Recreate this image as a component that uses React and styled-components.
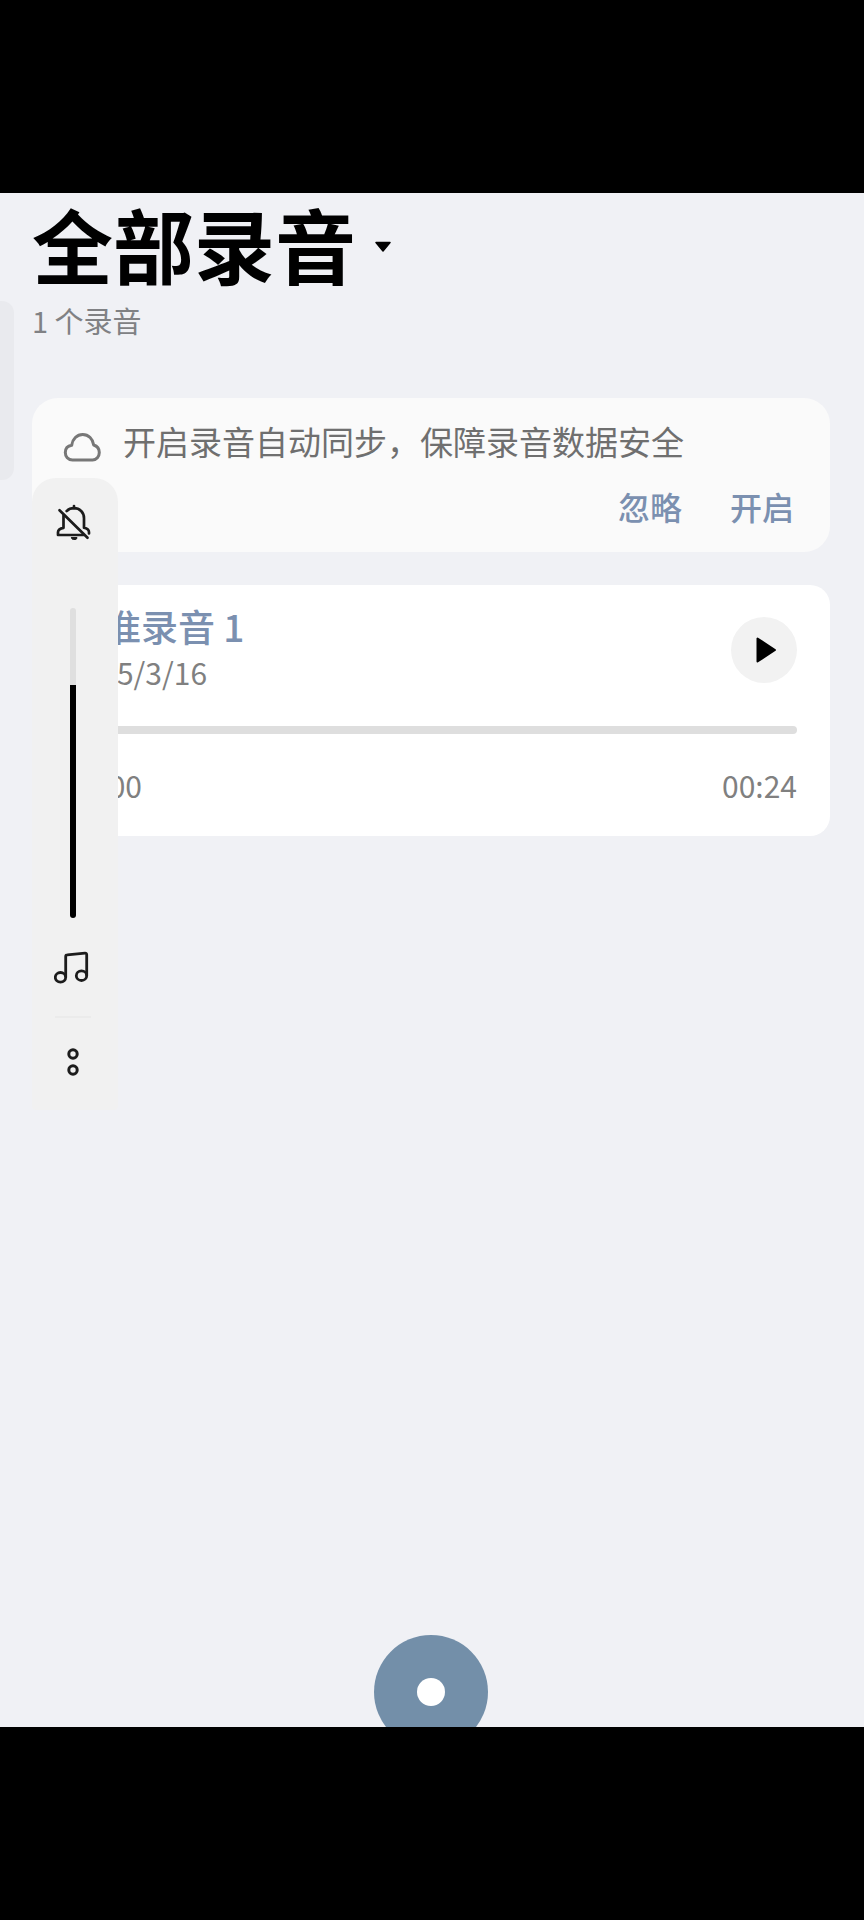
import React, { useState } from "react";
import styled, { createGlobalStyle } from "styled-components";

const GlobalStyle = createGlobalStyle`
  * {
    box-sizing: border-box;
  }
  body {
    margin: 0;
    background: #000;
    font-family: "Noto Sans CJK SC", "Noto Sans", sans-serif;
  }
  button {
    border: none;
    padding: 0;
    margin: 0;
    background: none;
    font: inherit;
    color: inherit;
    cursor: pointer;
  }
  svg {
    display: block;
  }
`;

const Frame = styled.div`
  min-height: 100vh;
  display: flex;
  flex-direction: column;
  padding: 193px 0;
`;

const Screen = styled.main`
  position: relative;
  flex: 1;
  display: flex;
  flex-direction: column;
  padding: 2px 34px 0 32px;
  background: #f0f1f5;
`;

const Title = styled.h1`
  margin: 0;
  font-size: 81px;
  line-height: 96px;
  font-weight: 700;
  color: #000;
`;

const TitleButton = styled.button`
  display: flex;
  align-items: center;
  gap: 18px;

  svg {
    margin-top: 8px;
  }
`;

const Count = styled.p`
  margin: 9px 0 58px;
  font-size: 29px;
  line-height: 40px;
  color: #808184;
`;

const Notice = styled.section`
  padding: 19px 36px 26px 30px;
  border-radius: 26px;
  background: #fafafa;
`;

const NoticeText = styled.div`
  display: flex;
  align-items: flex-end;
  gap: 21px;
  font-size: 33px;
  line-height: 48px;
  color: #6f6f6f;
  white-space: nowrap;

  p {
    margin: 0;
  }
`;

const NoticeActions = styled.div`
  display: flex;
  justify-content: flex-end;
  gap: 48px;
  margin-top: 21px;
`;

const ActionButton = styled.button`
  font-size: 32px;
  line-height: 40px;
  font-weight: 500;
  color: #7b90b0;
`;

const RecordCard = styled.article`
  margin-top: 33px;
  padding: 19px 33px 31px 35px;
  border-radius: 20px;
  background: #fff;
`;

const CardHeader = styled.div`
  display: flex;
  align-items: flex-end;
  justify-content: space-between;
`;

const RecordName = styled.h2`
  margin: 0 0 4px;
  font-size: 37px;
  line-height: 44px;
  font-weight: 500;
  color: #7b90b0;
`;

const Small = styled.div`
  font-size: 30px;
  line-height: 40px;
  color: #808080;
`;

const PlayButton = styled.button`
  display: flex;
  align-items: center;
  justify-content: center;
  width: 66px;
  height: 66px;
  margin-bottom: 9px;
  border-radius: 50%;
  background: #f2f2f2;
`;

const Seek = styled.input`
  display: block;
  appearance: none;
  width: 100%;
  height: 8px;
  margin: 34px 0 31px;
  border-radius: 4px;
  background: #dedede;

  &::-webkit-slider-thumb {
    appearance: none;
    width: 0;
    height: 0;
  }
`;

const Times = styled(Small)`
  display: flex;
  justify-content: space-between;
`;

const EdgeHandle = styled.div`
  position: absolute;
  left: 0;
  top: 108px;
  width: 14px;
  height: 179px;
  border-radius: 0 12px 12px 0;
  background: #e9eaee;
`;

// volume panel of the system, floats over the list
const VolumePanel = styled.aside`
  position: absolute;
  left: 32px;
  top: 285px;
  width: 86px;
  display: flex;
  flex-direction: column;
  align-items: center;
  padding: 26px 4px 32px 0;
  border-radius: 24px 24px 4px 4px;
  background: #f1f1f1;
`;

const Volume = styled.input`
  appearance: none;
  writing-mode: vertical-lr;
  direction: rtl;
  width: 6px;
  height: 310px;
  margin: 66px 0 32px;
  border-radius: 3px;
  background: linear-gradient(to top, #000 ${(p) => p.value}%, #dfdfdf ${(p) => p.value}%);

  &::-webkit-slider-thumb {
    appearance: none;
    width: 0;
    height: 0;
  }
`;

const Divider = styled.hr`
  width: 36px;
  height: 2px;
  margin: 30px 0;
  border: none;
  background: #ebebeb;
`;

// the record button runs off the bottom of the screen
const Footer = styled.footer`
  display: flex;
  justify-content: center;
  align-items: flex-start;
  height: 92px;
  margin-top: auto;
  overflow: hidden;
`;

const RecordButton = styled.button`
  display: flex;
  align-items: center;
  justify-content: center;
  flex: none;
  width: 114px;
  height: 114px;
  border-radius: 50%;
  background: #738fa9;

  &::after {
    content: "";
    width: 28px;
    height: 28px;
    border-radius: 50%;
    background: #fff;
  }
`;

const CaretIcon = () => (
  <svg width="18" height="12" viewBox="0 0 18 12" aria-hidden="true">
    <path d="M2 1.5h14L9 10z" fill="#000" stroke="#000" strokeWidth="1.5" strokeLinejoin="round" />
  </svg>
);

const CloudIcon = () => (
  <svg width="40" height="40" viewBox="0 -6 40 40" fill="none" stroke="#777" strokeWidth="3" strokeLinejoin="round" aria-hidden="true">
    <path d="M10.5 29C6 29 3.3 25.5 3.3 21.5c0-4 2.7-6.7 6.4-7.3C10.5 8 15 3.5 20.7 3.5C26.5 3.5 31 8 31.7 14c3.3 1 5.6 4 5.6 7.5c0 4-2.8 7.5-6.8 7.5z" />
  </svg>
);

const BellOffIcon = () => (
  <svg width="36" height="38" viewBox="-1 0 36 38" fill="none" stroke="#1c1c1c" strokeWidth="2.7" strokeLinecap="round" strokeLinejoin="round" aria-hidden="true">
    <path d="M18 2v2.5M10.7 7C12.7 5 15.2 4.2 18 4.2c5.8 0 10 4.3 10 10v9.5c2.5.5 5 2 5 4.5v1.3" />
    <path d="M7.5 11.5v12.3c-3 .5-5.5 1.700-5.500 4.400V31h25.500" />
    <path d="M3.5 6.3L31.5 33.8" />
    <path d="M15.500 33.500h5.500v.5a2 2 0 0 1-2 1.500h-1.500a2 2 0 0 1-2-1.500z" fill="#1c1c1c" strokeWidth="1" />
  </svg>
);

const MusicIcon = () => (
  <svg width="38" height="36" viewBox="3 0 38 36" fill="none" stroke="#1c1c1c" strokeWidth="2.8" strokeLinejoin="round" aria-hidden="true">
    <ellipse cx="9.5" cy="27.3" rx="5.2" ry="4.8" />
    <ellipse cx="30.5" cy="25.7" rx="5.2" ry="4.8" />
    <path d="M14.7 27.3V6.5q0-1.6 1.6-1.7l17.7-1.6q1.7-.1 1.7 1.6v20.9" />
  </svg>
);

const MoreIcon = () => (
  <svg width="14" height="30" viewBox="0 0 14 30" fill="none" stroke="#1c1c1c" strokeWidth="3" aria-hidden="true">
    <circle cx="7" cy="6" r="4.2" />
    <circle cx="7" cy="22" r="4.2" />
  </svg>
);

const App = () => {
  const [volume, setVolume] = useState(75);
  const [position, setPosition] = useState(0);

  return (
    <Frame>
      <GlobalStyle />
      <Screen>
        <Title>
          <TitleButton type="button">
            全部录音
            <CaretIcon />
          </TitleButton>
        </Title>
        <Count>1 个录音</Count>

        <Notice>
          <NoticeText>
            <CloudIcon />
            <p>开启录音自动同步，保障录音数据安全</p>
          </NoticeText>
          <NoticeActions>
            <ActionButton type="button">忽略</ActionButton>
            <ActionButton type="button">开启</ActionButton>
          </NoticeActions>
        </Notice>

        <RecordCard>
          <CardHeader>
            <div>
              <RecordName>标准录音 1</RecordName>
              <Small>2025/3/16</Small>
            </div>
            <PlayButton type="button" aria-label="播放">
              <svg width="24" height="28" viewBox="0 0 24 28" aria-hidden="true">
                <path d="M5.5 2.5v23L23 14z" fill="#000" stroke="#000" strokeWidth="2" strokeLinejoin="round" />
              </svg>
            </PlayButton>
          </CardHeader>
          <Seek
            type="range"
            aria-label="播放进度"
            max="24"
            value={position}
            onChange={(e) => setPosition(e.target.value)}
          />
          <Times>
            <span>00:00</span>
            <span>00:24</span>
          </Times>
        </RecordCard>

        <Footer>
          <RecordButton type="button" aria-label="开始录音" />
        </Footer>

        <EdgeHandle />
        <VolumePanel>
          <button type="button" aria-label="静音">
            <BellOffIcon />
          </button>
          <Volume
            type="range"
            aria-label="音量"
            value={volume}
            onChange={(e) => setVolume(e.target.value)}
          />
          <button type="button" aria-label="媒体音量">
            <MusicIcon />
          </button>
          <Divider />
          <button type="button" aria-label="更多">
            <MoreIcon />
          </button>
        </VolumePanel>
      </Screen>
    </Frame>
  );
};

export default App;
